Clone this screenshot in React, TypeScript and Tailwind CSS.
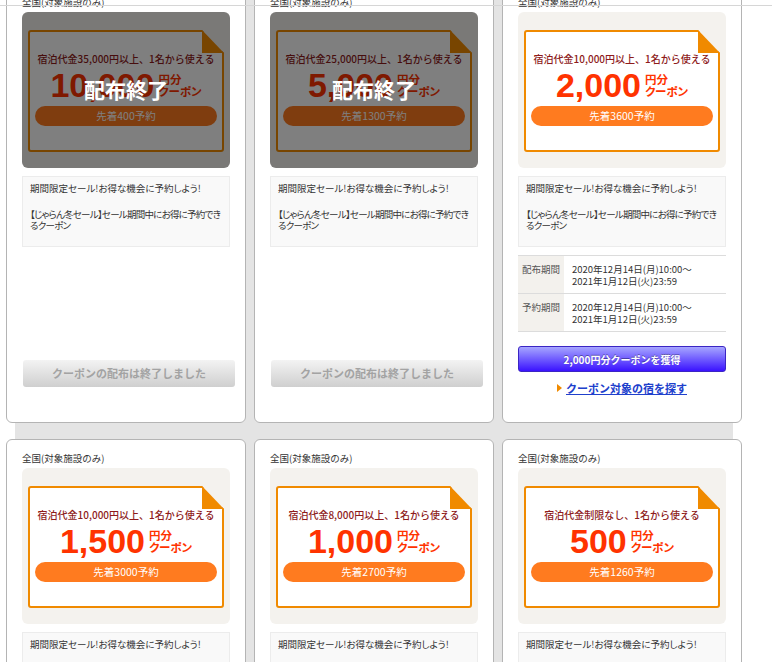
type Coupon = {
  area: string;
  condition: string;
  amount: string;
  limit: string;
  ended: boolean;
};

const coupons: Coupon[] = [
  { area: '全国(対象施設のみ)', condition: '宿泊代金35,000円以上、1名から使える', amount: '10,000', limit: '先着400予約', ended: true },
  { area: '全国(対象施設のみ)', condition: '宿泊代金25,000円以上、1名から使える', amount: '5,000', limit: '先着1300予約', ended: true },
  { area: '全国(対象施設のみ)', condition: '宿泊代金10,000円以上、1名から使える', amount: '2,000', limit: '先着3600予約', ended: false },
  { area: '全国(対象施設のみ)', condition: '宿泊代金10,000円以上、1名から使える', amount: '1,500', limit: '先着3000予約', ended: false },
  { area: '全国(対象施設のみ)', condition: '宿泊代金8,000円以上、1名から使える', amount: '1,000', limit: '先着2700予約', ended: false },
  { area: '全国(対象施設のみ)', condition: '宿泊代金制限なし、1名から使える', amount: '500', limit: '先着1260予約', ended: false },
];

const periods = [
  { label: '配布期間', lines: ['2020年12月14日(月)10:00～', '2021年1月12日(火)23:59'] },
  { label: '予約期間', lines: ['2020年12月14日(月)10:00～', '2021年1月12日(火)23:59'] },
];

function Ticket({ c }: { c: Coupon }) {
  return (
    <div className="relative flex h-full flex-col items-center rounded-[3px] border-2 border-[#f08a00] bg-white px-[5px] pt-[20px]">
      {/* 折り返し */}
      <svg className="absolute -right-[2px] -top-[2px]" width="22" height="23" viewBox="0 0 22 23">
        <polygon points="0,0 22,0 22,23" fill="#f4f2ee" />
        <polygon points="0,0 22,23 0,23" fill="#f08a00" />
      </svg>
      <p className="whitespace-nowrap text-[10px] font-medium leading-[14px] text-[#8e1b1b]">{c.condition}</p>
      <div className="mt-[2px] flex items-start gap-[4px]">
        <span className="font-['Liberation_Sans',sans-serif] text-[34px] font-bold leading-[34px] text-[#ff3300]">
          {c.amount}
        </span>
        <span className="mt-[5px] text-[11.5px] font-bold leading-[12px] text-[#ff3300] [font-feature-settings:'palt']">
          円分
          <br />
          クーポン
        </span>
      </div>
      <div className="mt-[4px] flex h-[20px] w-full items-center justify-center rounded-full bg-[#ff7b1f] text-[10.5px] text-white">
        {c.limit}
      </div>
    </div>
  );
}

function CouponCard({ c }: { c: Coupon }) {
  return (
    <div className="flex flex-col rounded-[6px] border border-[#b4b4b4] bg-white px-[15px] pb-[26px] pt-[11px]">
      <p className="mb-[3px] text-[9.5px] leading-[14px]">{c.area}</p>

      <div className="relative h-[156px] overflow-hidden rounded-[6px] bg-[#f4f2ee] px-[6px] pb-[16px] pt-[18px]">
        <Ticket c={c} />
        {c.ended && (
          <div className="absolute inset-0 flex items-center justify-center bg-black/50">
            <span className="text-[21px] font-bold text-white">配布終了</span>
          </div>
        )}
      </div>

      <div className="mt-[8px] border border-[#ececec] bg-[#f9f9f9] px-[7px] pb-[15px] pt-[6px] text-[9.5px] leading-[11px] [font-feature-settings:'palt']">
        <p className="whitespace-nowrap">期間限定セール!お得な機会に予約しよう!</p>
        <p className="mt-[15px] whitespace-nowrap tracking-[-0.75px]">
          【じゃらん冬セール】セール期間中にお得に予約でき
          <br />
          るクーポン
        </p>
      </div>

      {!c.ended && (
        <table className="mt-[8px] w-full border-collapse text-[9.5px] leading-[11.5px]">
          <tbody>
            {periods.map(p => (
              <tr key={p.label} className="border-y border-[#dcdcdc]">
                <th className="w-[46px] bg-[#f3f1ed] px-[4px] pb-[6px] pt-[8px] text-left align-top font-normal text-[#555]">
                  {p.label}
                </th>
                <td className="px-[8px] pb-[6px] pt-[8px] align-top">
                  {p.lines.map(l => (
                    <div key={l}>{l}</div>
                  ))}
                </td>
              </tr>
            ))}
          </tbody>
        </table>
      )}

      <div className="mt-auto pt-[14px]">
        {c.ended ? (
          <button className="mb-[9px] ml-[1px] flex h-[27px] w-[212px] items-center justify-center rounded-[3px] bg-[linear-gradient(to_bottom,#f3f3f3,#cfcfcf)] text-[11px] font-bold text-[#a3a3a3]">
            クーポンの配布は終了しました
          </button>
        ) : (
          <>
            <button className="flex h-[26px] w-full items-center justify-center rounded-[3px] border border-[#3b25c4] bg-[linear-gradient(to_bottom,#a6a6ff,#3a12ff)] text-[10px] font-bold text-white [text-shadow:0_-1px_0_rgba(0,0,0,0.35)]">
              {c.amount}円分クーポンを獲得
            </button>
            <div className="mt-[8px] flex items-center justify-center gap-[4px] leading-[16px]">
              <svg width="5" height="8" viewBox="0 0 5 8">
                <polygon points="0,0 5,4 0,8" fill="#f08a00" />
              </svg>
              <a className="text-[11px] font-bold text-[#2040cc] underline">クーポン対象の宿を探す</a>
            </div>
          </>
        )}
      </div>
    </div>
  );
}

export default function App() {
  return (
    <div className="relative h-[662px] w-[772px] overflow-hidden bg-white font-['Noto_Sans_CJK_JP',sans-serif] text-[#333]">
      <div className="absolute left-0 right-0 top-[5px] z-10 h-px bg-[#d6d6d6]" />
      <div className="ml-[15px] flow-root min-h-[662px] w-[718px] bg-[#e4e4e4]">
        <div className="-ml-[9px] -mt-[17px] grid w-[736px] grid-cols-3 gap-x-[8px] gap-y-[16px]">
          {coupons.map((c, i) => (
            <CouponCard key={i} c={c} />
          ))}
        </div>
      </div>
    </div>
  );
}
